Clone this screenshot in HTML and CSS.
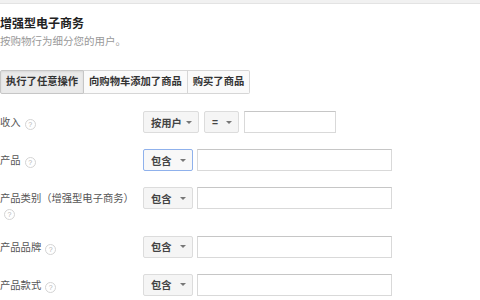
FILE: index.html
```html
<!DOCTYPE html>
<html lang="zh-CN">
<head>
  <meta charset="UTF-8" />
  <title>增强型电子商务</title>
  <link rel="stylesheet" href="styles.css">
</head>
<body>
  <div class="topbar"></div>
  <div class="panel">
    <div class="title">增强型电子商务</div>
    <div class="subtitle">按购物行为细分您的用户。</div>

    <div class="tabs">
      <span class="tab active">执行了任意操作</span>
      <span class="tab">向购物车添加了商品</span>
      <span class="tab">购买了商品</span>
    </div>

    <div class="row">
      <div class="label">收入<span class="help">?</span></div>
      <div class="controls spread">
        <span class="select wide">按用户<i class="caret"></i></span>
        <span class="select eq">=<i class="caret"></i></span>
        <span class="input short"></span>
      </div>
    </div>

    <div class="row">
      <div class="label">产品<span class="help">?</span></div>
      <div class="controls">
        <span class="select focus">包含<i class="caret"></i></span>
        <span class="input"></span>
      </div>
    </div>

    <div class="row">
      <div class="label">产品类别（增强型电子商务）<span class="help">?</span></div>
      <div class="controls">
        <span class="select">包含<i class="caret"></i></span>
        <span class="input"></span>
      </div>
    </div>

    <div class="row">
      <div class="label">产品品牌<span class="help">?</span></div>
      <div class="controls">
        <span class="select">包含<i class="caret"></i></span>
        <span class="input"></span>
      </div>
    </div>

    <div class="row">
      <div class="label">产品款式<span class="help">?</span></div>
      <div class="controls">
        <span class="select">包含<i class="caret"></i></span>
        <span class="input"></span>
      </div>
    </div>
  </div>
</body>
</html>
```

FILE: styles.css
```css
body {
  margin: 0;
  background: #fff;
  font-family: Arial, "Noto Sans CJK SC", sans-serif;
  color: #444;
  overflow: hidden;
}
.topbar {
  height: 3px;
  background: #f1f1f1;
  border-bottom: 1px solid #e3e3e3;
}
.title {
  margin-top: 12px;
  font-size: 12px;
  line-height: 16px;
  font-weight: bold;
  color: #222;
}
.subtitle {
  margin-top: 2px;
  font-size: 10.5px;
  line-height: 14px;
  color: #999;
}
.tabs {
  display: flex;
  margin-top: 22px;
}
.tab {
  height: 22px;
  line-height: 22px;
  padding: 0 5px;
  font-size: 10.3px;
  font-weight: bold;
  color: #333;
  background: #fafafa;
  border: 1px solid #d6d6d6;
  border-left: none;
}
.tab:first-child {
  border-left: 1px solid #d6d6d6;
  border-radius: 2px 0 0 2px;
}
.tab:last-child {
  border-radius: 0 2px 2px 0;
}
.tab.active {
  background: #eaeaea;
  border-color: #c6c6c6;
  box-shadow: inset 0 1px 2px rgba(0,0,0,0.08);
}
.row {
  display: flex;
  margin-top: 17px;
}
.row + .row {
  margin-top: 16px;
}
.label {
  width: 143px;
  padding-top: 5px;
  padding-right: 14px;
  box-sizing: border-box;
  font-size: 10.3px;
  line-height: 13.5px;
  color: #555;
}
.help {
  display: inline-block;
  width: 9px;
  height: 9px;
  margin-left: 4px;
  border: 1px solid #d4d4d4;
  border-radius: 50%;
  font-size: 7px;
  line-height: 9px;
  text-align: center;
  color: #b5b5b5;
  vertical-align: -1px;
}
.controls {
  display: flex;
  gap: 4px;
  align-items: flex-start;
}
.controls.spread {
  gap: 5px;
}
.select {
  display: flex;
  align-items: center;
  box-sizing: border-box;
  width: 50px;
  height: 22px;
  padding: 0 6px 0 7px;
  font-size: 10.3px;
  font-weight: bold;
  color: #444;
  background: #f5f5f5;
  border: 1px solid #dcdcdc;
  border-radius: 2px;
}
.select.wide {
  width: 56px;
}
.select.eq {
  width: 35px;
}
.select.focus {
  border-color: #8fb1ec;
  background: #f8f8f8;
}
.caret {
  margin-left: auto;
  width: 0;
  height: 0;
  border-left: 3px solid transparent;
  border-right: 3px solid transparent;
  border-top: 3px solid #777;
}
.input {
  box-sizing: border-box;
  width: 195px;
  height: 22px;
  background: #fff;
  border: 1px solid #d9d9d9;
  border-top-color: #c6c6c6;
}
.input.short {
  width: 92px;
}
```
